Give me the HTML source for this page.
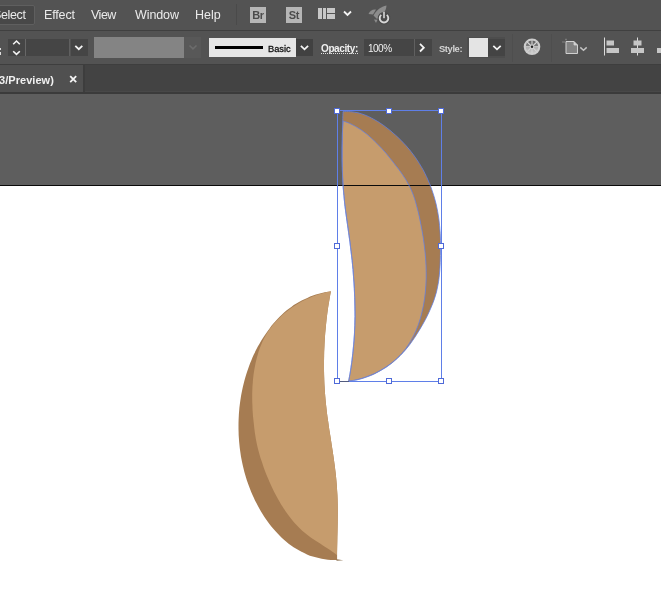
<!DOCTYPE html>
<html><head><meta charset="utf-8">
<style>
*{box-sizing:border-box;margin:0;padding:0}
html,body{width:661px;height:606px;overflow:hidden;background:#5e5e5e;font-family:"Liberation Sans",sans-serif;}
#root{position:relative;width:661px;height:606px;overflow:hidden;background:#5e5e5e}
.abs{position:absolute}
#menubar{left:0;top:0;width:661px;height:30px;background:#535353}
#mline{left:0;top:30px;width:661px;height:1px;background:#404040}
#ctrlbar{left:0;top:31px;width:661px;height:33px;background:#535353}
#cline{left:0;top:64px;width:661px;height:1px;background:#3e3e3e}
#tabbar{left:0;top:65px;width:661px;height:29px;background:#434343}
#tab{left:0;top:65px;width:83px;height:27px;background:#505050}
#tabsep{left:83px;top:65px;width:2px;height:29px;background:#3d3d3d}
#tabline{left:0;top:92px;width:661px;height:2px;background:#3b3b3b}
#tabhl{left:85px;top:91px;width:576px;height:1px;background:#484848}
#artboard{left:0;top:186px;width:661px;height:420px;background:#fff}
#abline{left:0;top:185px;width:661px;height:1px;background:#0a0a0a;z-index:5}
.mi{will-change:transform;position:absolute;top:7px;font-size:12.5px;color:#ebebeb;line-height:16px;white-space:nowrap}
.ct{will-change:transform;position:absolute;font-size:10px;color:#f0f0f0;line-height:12px;white-space:nowrap}
.box{position:absolute;top:39px;height:17px;background:#454545}
</style></head><body><div id="root">
<div id="menubar" class="abs"></div>
<div id="mline" class="abs"></div>
<div id="ctrlbar" class="abs"></div>
<div id="cline" class="abs"></div>
<div id="tabbar" class="abs"></div>
<div id="tab" class="abs"></div>
<div id="tabsep" class="abs"></div>
<div id="tabline" class="abs"></div>
<div id="tabhl" class="abs"></div>
<div id="artboard" class="abs"></div>

<!-- menu -->
<div class="abs" style="left:-3px;top:5px;width:38px;height:20px;background:#484848;border:1px solid #5f5f5f;border-radius:2px"></div>
<div class="mi" style="left:-7px;letter-spacing:-0.35px">Select</div>
<div class="mi" style="left:44px;letter-spacing:-0.15px">Effect</div>
<div class="mi" style="left:91px;letter-spacing:-0.5px">View</div>
<div class="mi" style="left:134.5px;letter-spacing:-0.1px">Window</div>
<div class="mi" style="left:195px">Help</div>
<div class="abs" style="left:236px;top:4px;width:1px;height:21px;background:#4a4a4a"></div>
<div class="abs" style="left:250px;top:7px;width:16px;height:16px;will-change:transform;background:#b6b6b6;color:#4c4c4c;font-size:11px;font-weight:bold;line-height:16px;text-align:center;letter-spacing:-0.3px">Br</div>
<div class="abs" style="left:286px;top:7px;width:16px;height:16px;will-change:transform;background:#b6b6b6;color:#4c4c4c;font-size:11px;font-weight:bold;line-height:16px;text-align:center;letter-spacing:-0.3px">St</div>

<!-- control bar -->
<div class="abs" style="left:0;top:48px;width:1px;height:2px;background:#ddd"></div>
<div class="abs" style="left:0;top:52px;width:1px;height:3px;background:#ddd"></div>
<div class="box" style="left:8px;width:17px"></div>
<div class="abs" style="left:25px;top:39px;width:1px;height:17px;background:#676767"></div>
<div class="box" style="left:26px;width:43px"></div>
<div class="abs" style="left:69px;top:39px;width:1px;height:17px;background:#606060"></div>
<div class="box" style="left:71px;width:17px"></div>
<div class="abs" style="left:94px;top:37px;width:90px;height:21px;background:#848484"></div>
<div class="abs" style="left:184px;top:37px;width:17px;height:21px;background:#585858"></div>
<div class="abs" style="left:209px;top:38px;width:87px;height:19px;background:#e6e6e6"></div>
<div class="abs" style="left:215px;top:46px;width:48px;height:3px;background:#000"></div>
<div class="ct" style="left:267.6px;top:43px;font-size:9.3px;color:#111;letter-spacing:0px;-webkit-text-stroke:0.3px #111">Basic</div>
<div class="box" style="left:296px;width:17px;background:#414141"></div>
<div class="ct" style="left:321px;top:42.6px;font-weight:bold;letter-spacing:-0.4px">Opacity:</div>
<div class="abs" style="left:321px;top:53px;width:37px;height:1px;background:repeating-linear-gradient(90deg,#e0e0e0 0,#e0e0e0 1px,transparent 1px,transparent 2px)"></div>
<div class="box" style="left:364px;width:50px"></div>
<div class="abs" style="left:414px;top:39px;width:1px;height:17px;background:#606060"></div>
<div class="ct" style="left:367.9px;top:42.6px;letter-spacing:-0.5px">100%</div>
<div class="box" style="left:415px;width:17px"></div>
<div class="ct" style="left:438.5px;top:43px;font-size:9.4px;color:#d4d4d4;letter-spacing:-0.4px;font-weight:bold">Style:</div>
<div class="abs" style="left:467px;top:37px;width:38px;height:21px;background:#4d4d4d"></div>
<div class="box" style="left:488px;width:17px;background:#444"></div>
<div class="abs" style="left:469px;top:38px;width:19px;height:19px;background:#e4e4e4"></div>
<div class="abs" style="left:512px;top:34px;width:1px;height:28px;background:#4e4e4e"></div>
<div class="abs" style="left:551px;top:34px;width:1px;height:28px;background:#4e4e4e"></div>

<!-- tab -->
<div class="ct" style="left:-1.5px;top:74px;font-weight:bold;font-size:11px;line-height:13px;letter-spacing:0.05px">3/Preview)</div>

<svg class="abs" style="left:0;top:0" width="661" height="606" viewBox="0 0 661 606">
<!-- menu icons -->
<g fill="#c8c8c8">
<rect x="318" y="8" width="4" height="11"/><rect x="323" y="8" width="3" height="11"/>
<rect x="327" y="8" width="8" height="5"/><rect x="327" y="14" width="8" height="5"/>
</g>
<path d="M344,11.5 L347.5,15 L351,11.5" fill="none" stroke="#f4f4f4" stroke-width="1.8"/>
<!-- rocket -->
<g fill="#8c8c8c">
<path d="M386.5,5.5 C381,6.5 376.5,10 373.5,15.5 L377,19 C382.5,16 386,11.5 386.5,5.5 Z"/>
<path d="M368.5,14 C370,10.5 372.5,9 376,9.5 L373,14.5 Z"/>
<path d="M374,19.5 L377.5,19.8 L376,23 Z"/>
</g>
<circle cx="384" cy="18.2" r="6.3" fill="#4a4a4a"/>
<path d="M381.2,14.9 A4.3,4.3 0 1 0 386.8,14.9" fill="none" stroke="#d8d8d8" stroke-width="1.9"/>
<rect x="383.2" y="12" width="1.6" height="6.2" fill="#d8d8d8"/>

<!-- control chevrons -->
<g fill="none" stroke="#f4f4f4" stroke-width="1.6">
<path d="M13.2,44.2 L16.5,41 L19.8,44.2"/>
<path d="M13.2,51.2 L16.5,54.4 L19.8,51.2"/>
<path d="M75.3,45.9 L78.8,49.2 L82.3,45.9" stroke-width="1.8"/>
<path d="M300.9,45.9 L304.5,49.3 L308.1,45.9" stroke-width="1.8"/>
<path d="M420,43.9 L423.8,47.7 L420,51.5" stroke-width="1.8"/>
<path d="M493.3,45.9 L497,49.3 L500.7,45.9" stroke-width="1.8"/>
</g>
<path d="M189.5,45.5 L193,48.8 L196.5,45.5" fill="none" stroke="#6c6c6c" stroke-width="1.6"/>
<!-- tab close -->
<path d="M70.2,76.2 L76.2,82.2 M76.2,76.2 L70.2,82.2" stroke="#f4f4f4" stroke-width="1.8" fill="none"/>

<!-- wheel -->
<defs><linearGradient id="wg" x1="0" y1="0" x2="0" y2="1"><stop offset="0" stop-color="#606060"/><stop offset="0.45" stop-color="#7c7c7c"/><stop offset="0.58" stop-color="#b0b0b0"/><stop offset="1" stop-color="#c8c8c8"/></linearGradient></defs>
<circle cx="532" cy="46.8" r="8.3" fill="#cdcdcd"/>
<circle cx="532" cy="46.8" r="6.3" fill="url(#wg)"/>
<g stroke="#d4d4d4" stroke-width="1.1">
<path d="M532,40 V53.6 M525.2,46.8 H538.8 M527.2,42 L536.8,51.6 M536.8,42 L527.2,51.6"/>
</g>
<circle cx="532" cy="46.8" r="2.2" fill="#cfcfcf"/>
<circle cx="532" cy="46.8" r="1.2" fill="#222"/>

<!-- doc icon -->
<path d="M566,41.5 H574 L577.5,45 V53.5 H566 Z" fill="#828282" stroke="#d0d0d0" stroke-width="1"/>
<path d="M574,41.5 V45 H577.5" fill="#d0d0d0" stroke="#d0d0d0" stroke-width="0.8"/>
<path d="M566,38.8 V41 M562.5,42 H565" stroke="#b0b0b0" stroke-width="1" stroke-dasharray="1 1"/>
<path d="M580.3,47.4 L583.5,50.2 L586.7,47.4" fill="none" stroke="#c4c4c4" stroke-width="1.4"/>

<!-- align icons -->
<g fill="#c6c6c6">
<rect x="604" y="37.5" width="1" height="18" fill="#dcdcdc"/>
<rect x="606.5" y="40.5" width="7.5" height="5"/>
<rect x="606.5" y="48" width="12.5" height="5"/>
<rect x="637" y="37.5" width="1" height="18" fill="#dcdcdc"/>
<rect x="633.5" y="40.5" width="8" height="5"/>
<rect x="631" y="48" width="13" height="5"/>
<rect x="657" y="48" width="6" height="5"/>
</g>

<g id="bean">
<path d="M343.0,111.6 C344.3,111.6 348.2,111.5 350.7,111.7 C353.2,111.9 355.6,112.3 358.0,112.8 C360.3,113.4 362.6,114.1 364.9,115.0 C367.2,115.8 369.4,116.9 371.5,118.0 C373.7,119.1 375.8,120.3 377.9,121.6 C379.9,122.9 382.0,124.3 384.0,125.7 C386.0,127.1 387.9,128.7 389.9,130.2 C391.8,131.8 393.7,133.4 395.5,135.1 C397.4,136.7 399.2,138.4 400.9,140.2 C402.7,142.0 404.4,143.8 406.0,145.6 C407.7,147.5 409.3,149.4 410.8,151.3 C412.3,153.3 413.8,155.3 415.3,157.3 C416.7,159.3 418.0,161.4 419.3,163.4 C420.6,165.5 421.9,167.7 423.1,169.8 C424.2,172.0 425.3,174.1 426.4,176.4 C427.4,178.6 428.4,180.8 429.3,183.1 C430.3,185.3 431.1,187.6 431.9,189.9 C432.7,192.2 433.5,194.5 434.2,196.9 C434.9,199.2 435.5,201.6 436.1,204.0 C436.6,206.4 437.1,208.8 437.6,211.2 C438.0,213.6 438.4,216.0 438.8,218.5 C439.1,220.9 439.4,223.3 439.6,225.8 C439.8,228.2 440.0,230.7 440.2,233.2 C440.3,235.6 440.4,238.1 440.5,240.6 C440.5,243.1 440.6,245.5 440.5,248.0 C440.5,250.5 440.5,253.0 440.4,255.4 C440.4,257.9 440.3,260.4 440.2,262.8 C440.1,265.3 440.0,267.8 439.8,270.2 C439.6,272.7 439.4,275.1 439.1,277.5 C438.8,279.9 438.5,282.4 438.0,284.8 C437.6,287.1 437.1,289.5 436.5,291.9 C435.9,294.2 435.2,296.6 434.4,298.9 C433.6,301.2 432.8,303.5 431.8,305.8 C430.9,308.0 429.9,310.3 428.9,312.5 C427.8,314.8 426.7,317.0 425.6,319.2 C424.4,321.3 423.2,323.5 422.0,325.7 C420.8,327.8 419.5,329.9 418.2,332.0 C416.9,334.1 415.6,336.2 414.2,338.3 C412.8,340.3 411.4,342.3 410.0,344.3 C408.5,346.2 407.0,348.2 405.4,350.0 C403.8,351.9 402.2,353.7 400.4,355.4 C398.7,357.2 396.9,358.8 395.0,360.4 C393.2,362.0 391.3,363.6 389.3,365.0 C387.3,366.5 385.3,367.9 383.2,369.1 C381.1,370.4 378.9,371.6 376.7,372.7 C374.6,373.9 372.3,374.9 370.0,375.8 C367.8,376.7 365.4,377.5 363.1,378.2 C360.7,379.0 358.3,379.6 355.9,380.1 C353.5,380.6 349.8,381.0 348.6,381.2 C348.9,379.7 349.8,375.0 350.3,372.0 C350.8,368.9 351.3,365.8 351.7,362.7 C352.1,359.6 352.5,356.5 352.8,353.4 C353.2,350.3 353.5,347.3 353.7,344.2 C354.0,341.1 354.2,338.0 354.4,334.9 C354.5,331.7 354.7,328.6 354.8,325.5 C354.9,322.4 354.9,319.3 355.0,316.2 C355.0,313.1 355.0,310.0 354.9,306.9 C354.9,303.8 354.8,300.7 354.7,297.6 C354.6,294.5 354.5,291.4 354.3,288.3 C354.2,285.2 354.0,282.0 353.7,278.9 C353.5,275.8 353.3,272.7 353.0,269.6 C352.7,266.5 352.4,263.4 352.1,260.3 C351.8,257.2 351.4,254.1 351.0,251.1 C350.7,248.0 350.3,244.9 349.9,241.8 C349.4,238.7 349.0,235.6 348.6,232.5 C348.1,229.4 347.7,226.4 347.3,223.3 C346.8,220.2 346.4,217.1 346.0,214.0 C345.6,211.0 345.2,207.9 344.8,204.8 C344.5,201.7 344.2,198.6 343.9,195.5 C343.6,192.4 343.3,189.3 343.1,186.3 C342.9,183.2 342.7,180.1 342.6,177.0 C342.5,173.9 342.4,170.8 342.3,167.6 C342.2,164.5 342.2,161.4 342.1,158.3 C342.1,155.2 342.1,152.1 342.1,149.0 C342.2,145.9 342.2,142.8 342.3,139.6 C342.3,136.5 342.4,133.4 342.5,130.3 C342.5,127.2 342.6,124.1 342.7,120.9 C342.8,117.8 343.0,113.2 343.0,111.6 Z" fill="#a67c52"/>
<path d="M343.3,121.0 C344.4,121.4 347.6,122.5 349.7,123.4 C351.8,124.3 353.8,125.4 355.7,126.5 C357.7,127.6 359.6,128.8 361.4,130.1 C363.2,131.4 365.0,132.7 366.8,134.1 C368.5,135.5 370.2,137.0 371.8,138.5 C373.5,140.0 375.1,141.6 376.7,143.2 C378.3,144.8 379.8,146.4 381.4,148.1 C382.9,149.7 384.4,151.4 385.9,153.1 C387.3,154.9 388.8,156.6 390.2,158.4 C391.6,160.1 393.1,161.9 394.4,163.7 C395.8,165.5 397.2,167.3 398.6,169.1 C399.9,170.9 401.2,172.7 402.5,174.6 C403.8,176.5 405.0,178.3 406.2,180.2 C407.3,182.2 408.4,184.1 409.4,186.1 C410.4,188.1 411.4,190.1 412.2,192.2 C413.1,194.2 413.8,196.3 414.5,198.4 C415.2,200.6 415.9,202.7 416.4,204.9 C417.0,207.0 417.6,209.2 418.1,211.4 C418.6,213.6 419.1,215.8 419.6,218.0 C420.1,220.2 420.5,222.4 420.9,224.6 C421.4,226.8 421.8,229.1 422.2,231.3 C422.6,233.5 422.9,235.7 423.3,238.0 C423.6,240.2 424.0,242.4 424.2,244.7 C424.5,246.9 424.8,249.1 425.0,251.4 C425.3,253.6 425.5,255.9 425.6,258.1 C425.8,260.4 425.9,262.6 426.0,264.9 C426.1,267.1 426.2,269.4 426.2,271.6 C426.2,273.8 426.2,276.1 426.2,278.3 C426.1,280.6 426.0,282.8 425.9,285.1 C425.8,287.3 425.6,289.6 425.4,291.8 C425.2,294.0 424.9,296.3 424.6,298.5 C424.3,300.7 423.9,303.0 423.5,305.2 C423.1,307.4 422.6,309.6 422.1,311.8 C421.6,314.0 421.0,316.2 420.4,318.4 C419.7,320.5 419.0,322.7 418.3,324.8 C417.5,326.9 416.7,329.0 415.8,331.1 C414.9,333.1 414.0,335.1 412.9,337.1 C411.9,339.1 410.8,341.0 409.6,342.9 C408.4,344.8 407.2,346.6 405.9,348.4 C404.5,350.2 403.1,351.9 401.6,353.6 C400.1,355.2 398.5,356.8 396.9,358.4 C395.2,359.9 393.5,361.4 391.7,362.8 C390.0,364.2 388.1,365.6 386.2,366.8 C384.3,368.1 382.4,369.3 380.4,370.4 C378.4,371.5 376.4,372.6 374.3,373.6 C372.2,374.5 370.1,375.4 368.0,376.2 C365.9,377.0 363.7,377.8 361.6,378.4 C359.4,379.0 357.3,379.6 355.1,380.1 C352.9,380.5 349.7,381.0 348.6,381.2 C348.9,379.7 349.8,375.0 350.3,372.0 C350.8,368.9 351.3,365.8 351.7,362.7 C352.1,359.6 352.5,356.5 352.8,353.4 C353.2,350.3 353.5,347.3 353.7,344.2 C354.0,341.1 354.2,338.0 354.4,334.9 C354.5,331.7 354.7,328.6 354.8,325.5 C354.9,322.4 354.9,319.3 355.0,316.2 C355.0,313.1 355.0,310.0 354.9,306.9 C354.9,303.8 354.8,300.7 354.7,297.6 C354.6,294.5 354.5,291.4 354.3,288.3 C354.2,285.2 354.0,282.0 353.7,278.9 C353.5,275.8 353.3,272.7 353.0,269.6 C352.7,266.5 352.4,263.4 352.1,260.3 C351.8,257.2 351.4,254.1 351.0,251.1 C350.7,248.0 350.3,244.9 349.9,241.8 C349.4,238.7 349.0,235.6 348.6,232.5 C348.1,229.4 347.7,226.4 347.3,223.3 C346.8,220.2 346.4,217.1 346.0,214.0 C345.6,211.0 345.2,207.9 344.8,204.8 C344.5,201.7 344.2,198.6 343.9,195.5 C343.6,192.4 343.3,189.3 343.1,186.3 C342.9,183.2 342.7,180.1 342.6,177.0 C342.5,173.9 342.4,170.8 342.3,167.6 C342.2,164.5 342.2,161.4 342.1,158.3 C342.1,155.2 342.1,152.1 342.1,149.0 C342.2,145.9 342.2,142.8 342.3,139.6 C342.3,136.5 342.3,133.4 342.5,130.3 C342.6,127.2 343.2,122.5 343.3,121.0 Z" fill="#c69c6d"/>
</g>
<path d="M330.9,291.3 C329.9,291.5 326.9,291.9 324.8,292.3 C322.8,292.7 320.8,293.2 318.9,293.8 C316.9,294.3 314.9,294.9 313.0,295.6 C311.1,296.3 309.2,297.0 307.3,297.9 C305.4,298.7 303.5,299.5 301.7,300.5 C299.9,301.4 298.1,302.4 296.4,303.5 C294.6,304.5 292.9,305.7 291.3,306.9 C289.6,308.0 288.0,309.3 286.4,310.6 C284.9,311.9 283.3,313.3 281.8,314.7 C280.4,316.0 278.9,317.5 277.5,319.0 C276.1,320.5 274.8,322.0 273.4,323.6 C272.1,325.1 270.8,326.8 269.6,328.4 C268.3,330.0 267.1,331.7 266.0,333.4 C264.8,335.1 263.7,336.8 262.6,338.5 C261.5,340.2 260.5,342.0 259.5,343.8 C258.4,345.5 257.5,347.3 256.5,349.1 C255.6,351.0 254.7,352.8 253.8,354.6 C253.0,356.5 252.1,358.4 251.4,360.2 C250.6,362.1 249.8,364.0 249.1,365.9 C248.4,367.8 247.7,369.8 247.1,371.7 C246.4,373.6 245.8,375.6 245.3,377.6 C244.7,379.5 244.2,381.5 243.7,383.5 C243.2,385.5 242.7,387.5 242.3,389.5 C241.9,391.5 241.5,393.5 241.1,395.5 C240.8,397.5 240.5,399.5 240.2,401.6 C239.9,403.6 239.7,405.6 239.4,407.7 C239.2,409.7 239.1,411.8 238.9,413.8 C238.8,415.9 238.7,417.9 238.6,420.0 C238.5,422.0 238.5,424.1 238.5,426.1 C238.5,428.2 238.5,430.2 238.6,432.3 C238.6,434.3 238.7,436.4 238.9,438.4 C239.0,440.4 239.2,442.5 239.4,444.5 C239.6,446.6 239.8,448.6 240.1,450.6 C240.4,452.7 240.7,454.7 241.0,456.7 C241.4,458.7 241.8,460.7 242.2,462.7 C242.6,464.7 243.1,466.7 243.6,468.7 C244.0,470.7 244.6,472.6 245.1,474.6 C245.7,476.6 246.3,478.5 246.9,480.5 C247.6,482.4 248.2,484.3 249.0,486.2 C249.7,488.1 250.4,490.0 251.2,491.9 C252.0,493.8 252.8,495.7 253.7,497.5 C254.5,499.4 255.4,501.2 256.4,503.0 C257.3,504.8 258.3,506.7 259.3,508.4 C260.3,510.2 261.4,512.0 262.4,513.7 C263.5,515.5 264.7,517.2 265.8,518.9 C267.0,520.6 268.2,522.3 269.4,523.9 C270.7,525.5 272.0,527.1 273.3,528.7 C274.6,530.3 276.0,531.8 277.4,533.3 C278.8,534.8 280.2,536.3 281.7,537.7 C283.2,539.1 284.7,540.4 286.3,541.7 C287.8,543.0 289.4,544.3 291.1,545.5 C292.7,546.6 294.4,547.8 296.2,548.8 C297.9,549.9 299.7,550.9 301.5,551.8 C303.3,552.7 305.1,553.6 307.0,554.4 C308.9,555.2 310.8,555.9 312.8,556.5 C314.7,557.1 316.7,557.7 318.7,558.1 C320.7,558.6 322.7,559.0 324.8,559.3 C326.8,559.6 328.9,559.8 330.9,559.9 C333.0,560.0 336.1,560.0 337.1,560.0 C337.1,558.4 337.1,553.8 337.1,550.7 C337.1,547.6 337.2,544.5 337.3,541.4 C337.3,538.3 337.4,535.2 337.5,532.1 C337.6,528.9 337.6,525.8 337.7,522.7 C337.7,519.6 337.8,516.5 337.8,513.4 C337.8,510.3 337.8,507.2 337.7,504.1 C337.7,501.0 337.5,497.9 337.4,494.8 C337.2,491.7 337.0,488.6 336.8,485.5 C336.6,482.5 336.3,479.4 336.0,476.3 C335.6,473.2 335.3,470.1 334.9,467.1 C334.5,464.0 334.1,460.9 333.7,457.9 C333.2,454.8 332.8,451.7 332.3,448.7 C331.8,445.6 331.3,442.5 330.9,439.5 C330.4,436.4 329.9,433.3 329.4,430.3 C329.0,427.2 328.5,424.1 328.1,421.0 C327.6,418.0 327.2,414.9 326.8,411.8 C326.5,408.7 326.1,405.6 325.8,402.6 C325.5,399.5 325.3,396.4 325.0,393.3 C324.8,390.2 324.6,387.1 324.4,384.0 C324.3,380.9 324.2,377.8 324.1,374.7 C324.0,371.6 324.0,368.4 324.0,365.3 C324.0,362.2 324.0,359.1 324.1,356.0 C324.1,352.9 324.2,349.8 324.4,346.7 C324.5,343.6 324.7,340.5 324.9,337.4 C325.1,334.3 325.4,331.2 325.7,328.1 C326.0,325.0 326.3,322.0 326.6,318.9 C327.0,315.8 327.4,312.7 327.8,309.6 C328.3,306.6 328.7,303.5 329.3,300.5 C329.8,297.4 330.6,292.8 330.9,291.3 Z" fill="#a67c52"/>
<path d="M330.9,291.3 C330.0,291.5 327.2,292.0 325.4,292.5 C323.6,292.9 321.8,293.4 320.0,294.0 C318.2,294.5 316.4,295.1 314.6,295.8 C312.8,296.4 311.1,297.1 309.3,297.9 C307.6,298.6 305.9,299.4 304.2,300.3 C302.5,301.1 300.8,302.0 299.1,303.0 C297.5,303.9 295.9,304.9 294.3,305.9 C292.7,307.0 291.1,308.0 289.6,309.2 C288.1,310.3 286.6,311.4 285.1,312.7 C283.7,313.9 282.3,315.1 280.9,316.4 C279.5,317.7 278.2,319.0 276.9,320.4 C275.6,321.8 274.4,323.2 273.2,324.6 C272.0,326.1 270.9,327.5 269.8,329.1 C268.7,330.6 267.7,332.2 266.7,333.7 C265.7,335.3 264.8,337.0 264.0,338.6 C263.1,340.3 262.3,342.0 261.6,343.7 C260.9,345.4 260.2,347.2 259.5,349.0 C258.9,350.7 258.3,352.5 257.8,354.4 C257.2,356.2 256.7,358.0 256.3,359.9 C255.8,361.7 255.4,363.6 255.1,365.4 C254.7,367.3 254.4,369.2 254.1,371.1 C253.8,372.9 253.5,374.8 253.3,376.7 C253.1,378.6 252.9,380.5 252.8,382.4 C252.6,384.3 252.5,386.2 252.4,388.0 C252.3,389.9 252.3,391.8 252.2,393.7 C252.2,395.6 252.2,397.4 252.2,399.3 C252.2,401.2 252.3,403.1 252.4,405.0 C252.4,406.8 252.5,408.7 252.6,410.6 C252.7,412.5 252.9,414.3 253.0,416.2 C253.2,418.1 253.4,420.0 253.6,421.8 C253.8,423.7 254.0,425.6 254.2,427.5 C254.4,429.3 254.7,431.2 254.9,433.1 C255.2,434.9 255.5,436.8 255.8,438.7 C256.2,440.5 256.5,442.4 256.9,444.2 C257.3,446.1 257.7,447.9 258.2,449.7 C258.7,451.5 259.2,453.4 259.7,455.2 C260.2,457.0 260.8,458.8 261.4,460.6 C261.9,462.3 262.6,464.1 263.2,465.9 C263.8,467.7 264.5,469.4 265.1,471.2 C265.8,473.0 266.5,474.7 267.2,476.5 C267.9,478.2 268.7,480.0 269.4,481.7 C270.2,483.4 271.0,485.1 271.8,486.9 C272.6,488.6 273.4,490.3 274.2,491.9 C275.1,493.6 276.0,495.3 276.9,497.0 C277.8,498.6 278.7,500.3 279.7,501.9 C280.6,503.5 281.6,505.1 282.6,506.7 C283.6,508.3 284.7,509.9 285.7,511.4 C286.8,513.0 287.9,514.5 289.0,516.0 C290.2,517.5 291.3,519.0 292.5,520.4 C293.7,521.9 295.0,523.3 296.3,524.7 C297.5,526.0 298.8,527.4 300.2,528.7 C301.5,530.0 302.9,531.2 304.4,532.4 C305.8,533.6 307.3,534.8 308.8,535.9 C310.3,537.1 311.8,538.1 313.4,539.2 C314.9,540.3 316.5,541.3 318.1,542.3 C319.7,543.4 321.3,544.4 322.9,545.4 C324.5,546.4 326.1,547.4 327.7,548.5 C329.3,549.5 330.8,550.6 332.4,551.7 C333.9,552.7 336.1,554.4 336.9,555.0 C336.9,554.3 337.0,553.0 337.1,550.7 C337.2,548.4 337.2,544.5 337.3,541.4 C337.3,538.3 337.4,535.2 337.5,532.1 C337.6,528.9 337.6,525.8 337.7,522.7 C337.7,519.6 337.8,516.5 337.8,513.4 C337.8,510.3 337.8,507.2 337.7,504.1 C337.7,501.0 337.5,497.9 337.4,494.8 C337.2,491.7 337.0,488.6 336.8,485.5 C336.6,482.5 336.3,479.4 336.0,476.3 C335.6,473.2 335.3,470.1 334.9,467.1 C334.5,464.0 334.1,460.9 333.7,457.9 C333.2,454.8 332.8,451.7 332.3,448.7 C331.8,445.6 331.3,442.5 330.9,439.5 C330.4,436.4 329.9,433.3 329.4,430.3 C329.0,427.2 328.5,424.1 328.1,421.0 C327.6,418.0 327.2,414.9 326.8,411.8 C326.5,408.7 326.1,405.6 325.8,402.6 C325.5,399.5 325.3,396.4 325.0,393.3 C324.8,390.2 324.6,387.1 324.4,384.0 C324.3,380.9 324.2,377.8 324.1,374.7 C324.0,371.6 324.0,368.4 324.0,365.3 C324.0,362.2 324.0,359.1 324.1,356.0 C324.1,352.9 324.2,349.8 324.4,346.7 C324.5,343.6 324.7,340.5 324.9,337.4 C325.1,334.3 325.4,331.2 325.7,328.1 C326.0,325.0 326.3,322.0 326.6,318.9 C327.0,315.8 327.4,312.7 327.8,309.6 C328.3,306.6 328.7,303.5 329.3,300.5 C329.8,297.4 330.6,292.8 330.9,291.3 Z" fill="#c69c6d"/>
<path d="M336.5,559.3 L343.3,560.2 L336.5,560.8 Z" fill="#8a7050"/>
<rect x="0" y="185" width="661" height="1" fill="#0a0a0a"/>
<!-- selection -->
<g fill="none" stroke="#5f7fe8" stroke-width="1">
<g opacity="0.75"><path d="M343.0,111.6 C344.3,111.6 348.2,111.5 350.7,111.7 C353.2,111.9 355.6,112.3 358.0,112.8 C360.3,113.4 362.6,114.1 364.9,115.0 C367.2,115.8 369.4,116.9 371.5,118.0 C373.7,119.1 375.8,120.3 377.9,121.6 C379.9,122.9 382.0,124.3 384.0,125.7 C386.0,127.1 387.9,128.7 389.9,130.2 C391.8,131.8 393.7,133.4 395.5,135.1 C397.4,136.7 399.2,138.4 400.9,140.2 C402.7,142.0 404.4,143.8 406.0,145.6 C407.7,147.5 409.3,149.4 410.8,151.3 C412.3,153.3 413.8,155.3 415.3,157.3 C416.7,159.3 418.0,161.4 419.3,163.4 C420.6,165.5 421.9,167.7 423.1,169.8 C424.2,172.0 425.3,174.1 426.4,176.4 C427.4,178.6 428.4,180.8 429.3,183.1 C430.3,185.3 431.1,187.6 431.9,189.9 C432.7,192.2 433.5,194.5 434.2,196.9 C434.9,199.2 435.5,201.6 436.1,204.0 C436.6,206.4 437.1,208.8 437.6,211.2 C438.0,213.6 438.4,216.0 438.8,218.5 C439.1,220.9 439.4,223.3 439.6,225.8 C439.8,228.2 440.0,230.7 440.2,233.2 C440.3,235.6 440.4,238.1 440.5,240.6 C440.5,243.1 440.6,245.5 440.5,248.0 C440.5,250.5 440.5,253.0 440.4,255.4 C440.4,257.9 440.3,260.4 440.2,262.8 C440.1,265.3 440.0,267.8 439.8,270.2 C439.6,272.7 439.4,275.1 439.1,277.5 C438.8,279.9 438.5,282.4 438.0,284.8 C437.6,287.1 437.1,289.5 436.5,291.9 C435.9,294.2 435.2,296.6 434.4,298.9 C433.6,301.2 432.8,303.5 431.8,305.8 C430.9,308.0 429.9,310.3 428.9,312.5 C427.8,314.8 426.7,317.0 425.6,319.2 C424.4,321.3 423.2,323.5 422.0,325.7 C420.8,327.8 419.5,329.9 418.2,332.0 C416.9,334.1 415.6,336.2 414.2,338.3 C412.8,340.3 411.4,342.3 410.0,344.3 C408.5,346.2 407.0,348.2 405.4,350.0 C403.8,351.9 402.2,353.7 400.4,355.4 C398.7,357.2 396.9,358.8 395.0,360.4 C393.2,362.0 391.3,363.6 389.3,365.0 C387.3,366.5 385.3,367.9 383.2,369.1 C381.1,370.4 378.9,371.6 376.7,372.7 C374.6,373.9 372.3,374.9 370.0,375.8 C367.8,376.7 365.4,377.5 363.1,378.2 C360.7,379.0 358.3,379.6 355.9,380.1 C353.5,380.6 349.8,381.0 348.6,381.2 C348.9,379.7 349.8,375.0 350.3,372.0 C350.8,368.9 351.3,365.8 351.7,362.7 C352.1,359.6 352.5,356.5 352.8,353.4 C353.2,350.3 353.5,347.3 353.7,344.2 C354.0,341.1 354.2,338.0 354.4,334.9 C354.5,331.7 354.7,328.6 354.8,325.5 C354.9,322.4 354.9,319.3 355.0,316.2 C355.0,313.1 355.0,310.0 354.9,306.9 C354.9,303.8 354.8,300.7 354.7,297.6 C354.6,294.5 354.5,291.4 354.3,288.3 C354.2,285.2 354.0,282.0 353.7,278.9 C353.5,275.8 353.3,272.7 353.0,269.6 C352.7,266.5 352.4,263.4 352.1,260.3 C351.8,257.2 351.4,254.1 351.0,251.1 C350.7,248.0 350.3,244.9 349.9,241.8 C349.4,238.7 349.0,235.6 348.6,232.5 C348.1,229.4 347.7,226.4 347.3,223.3 C346.8,220.2 346.4,217.1 346.0,214.0 C345.6,211.0 345.2,207.9 344.8,204.8 C344.5,201.7 344.2,198.6 343.9,195.5 C343.6,192.4 343.3,189.3 343.1,186.3 C342.9,183.2 342.7,180.1 342.6,177.0 C342.5,173.9 342.4,170.8 342.3,167.6 C342.2,164.5 342.2,161.4 342.1,158.3 C342.1,155.2 342.1,152.1 342.1,149.0 C342.2,145.9 342.2,142.8 342.3,139.6 C342.3,136.5 342.4,133.4 342.5,130.3 C342.5,127.2 342.6,124.1 342.7,120.9 C342.8,117.8 343.0,113.2 343.0,111.6 Z"/>
<path d="M343.3,121.0 C344.4,121.4 347.6,122.5 349.7,123.4 C351.8,124.3 353.8,125.4 355.7,126.5 C357.7,127.6 359.6,128.8 361.4,130.1 C363.2,131.4 365.0,132.7 366.8,134.1 C368.5,135.5 370.2,137.0 371.8,138.5 C373.5,140.0 375.1,141.6 376.7,143.2 C378.3,144.8 379.8,146.4 381.4,148.1 C382.9,149.7 384.4,151.4 385.9,153.1 C387.3,154.9 388.8,156.6 390.2,158.4 C391.6,160.1 393.1,161.9 394.4,163.7 C395.8,165.5 397.2,167.3 398.6,169.1 C399.9,170.9 401.2,172.7 402.5,174.6 C403.8,176.5 405.0,178.3 406.2,180.2 C407.3,182.2 408.4,184.1 409.4,186.1 C410.4,188.1 411.4,190.1 412.2,192.2 C413.1,194.2 413.8,196.3 414.5,198.4 C415.2,200.6 415.9,202.7 416.4,204.9 C417.0,207.0 417.6,209.2 418.1,211.4 C418.6,213.6 419.1,215.8 419.6,218.0 C420.1,220.2 420.5,222.4 420.9,224.6 C421.4,226.8 421.8,229.1 422.2,231.3 C422.6,233.5 422.9,235.7 423.3,238.0 C423.6,240.2 424.0,242.4 424.2,244.7 C424.5,246.9 424.8,249.1 425.0,251.4 C425.3,253.6 425.5,255.9 425.6,258.1 C425.8,260.4 425.9,262.6 426.0,264.9 C426.1,267.1 426.2,269.4 426.2,271.6 C426.2,273.8 426.2,276.1 426.2,278.3 C426.1,280.6 426.0,282.8 425.9,285.1 C425.8,287.3 425.6,289.6 425.4,291.8 C425.2,294.0 424.9,296.3 424.6,298.5 C424.3,300.7 423.9,303.0 423.5,305.2 C423.1,307.4 422.6,309.6 422.1,311.8 C421.6,314.0 421.0,316.2 420.4,318.4 C419.7,320.5 419.0,322.7 418.3,324.8 C417.5,326.9 416.7,329.0 415.8,331.1 C414.9,333.1 414.0,335.1 412.9,337.1 C411.9,339.1 410.8,341.0 409.6,342.9 C408.4,344.8 407.2,346.6 405.9,348.4 C404.5,350.2 403.1,351.9 401.6,353.6 C400.1,355.2 398.5,356.8 396.9,358.4 C395.2,359.9 393.5,361.4 391.7,362.8 C390.0,364.2 388.1,365.6 386.2,366.8 C384.3,368.1 382.4,369.3 380.4,370.4 C378.4,371.5 376.4,372.6 374.3,373.6 C372.2,374.5 370.1,375.4 368.0,376.2 C365.9,377.0 363.7,377.8 361.6,378.4 C359.4,379.0 357.3,379.6 355.1,380.1 C352.9,380.5 349.7,381.0 348.6,381.2 C348.9,379.7 349.8,375.0 350.3,372.0 C350.8,368.9 351.3,365.8 351.7,362.7 C352.1,359.6 352.5,356.5 352.8,353.4 C353.2,350.3 353.5,347.3 353.7,344.2 C354.0,341.1 354.2,338.0 354.4,334.9 C354.5,331.7 354.7,328.6 354.8,325.5 C354.9,322.4 354.9,319.3 355.0,316.2 C355.0,313.1 355.0,310.0 354.9,306.9 C354.9,303.8 354.8,300.7 354.7,297.6 C354.6,294.5 354.5,291.4 354.3,288.3 C354.2,285.2 354.0,282.0 353.7,278.9 C353.5,275.8 353.3,272.7 353.0,269.6 C352.7,266.5 352.4,263.4 352.1,260.3 C351.8,257.2 351.4,254.1 351.0,251.1 C350.7,248.0 350.3,244.9 349.9,241.8 C349.4,238.7 349.0,235.6 348.6,232.5 C348.1,229.4 347.7,226.4 347.3,223.3 C346.8,220.2 346.4,217.1 346.0,214.0 C345.6,211.0 345.2,207.9 344.8,204.8 C344.5,201.7 344.2,198.6 343.9,195.5 C343.6,192.4 343.3,189.3 343.1,186.3 C342.9,183.2 342.7,180.1 342.6,177.0 C342.5,173.9 342.4,170.8 342.3,167.6 C342.2,164.5 342.2,161.4 342.1,158.3 C342.1,155.2 342.1,152.1 342.1,149.0 C342.2,145.9 342.2,142.8 342.3,139.6 C342.3,136.5 342.3,133.4 342.5,130.3 C342.6,127.2 343.2,122.5 343.3,121.0 Z"/></g>
<rect x="337.5" y="110.5" width="104" height="271"/>
</g>
<g fill="#fff" stroke="#4f6ad8" stroke-width="1">
<rect x="334.5" y="108.5" width="5" height="5"/>
<rect x="386.5" y="108.5" width="5" height="5"/>
<rect x="438.5" y="108.5" width="5" height="5"/>
<rect x="334.5" y="243.5" width="5" height="5"/>
<rect x="438.5" y="243.5" width="5" height="5"/>
<rect x="334.5" y="378.5" width="5" height="5"/>
<rect x="386.5" y="378.5" width="5" height="5"/>
<rect x="438.5" y="378.5" width="5" height="5"/>
</g>
<rect x="340" y="381" width="9" height="1" fill="#4a4438" opacity="0.6"/>
</svg>
</div></body></html>
